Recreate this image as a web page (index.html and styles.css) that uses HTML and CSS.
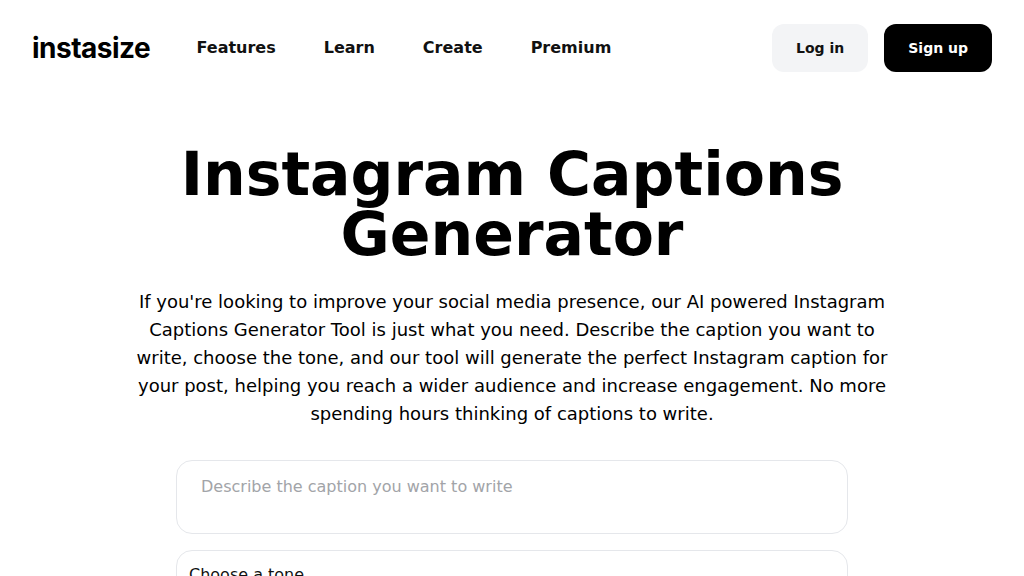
FILE: index.html
```html
<!DOCTYPE html>
<html lang="en">
<head>
<meta charset="utf-8">
<title>Instagram Captions Generator</title>
<link rel="stylesheet" href="styles.css">
</head>
<body>
<header class="header">
  <div class="header-left">
    <a class="logo" href="#">instasize</a>
    <nav class="nav">
      <a href="#">Features</a>
      <a href="#">Learn</a>
      <a href="#">Create</a>
      <a href="#">Premium</a>
    </nav>
  </div>
  <div class="actions">
    <a class="btn btn-light" href="#">Log in</a>
    <a class="btn btn-dark" href="#">Sign up</a>
  </div>
</header>
<main class="main">
  <h1 class="title">Instagram Captions Generator</h1>
  <p class="lead">If you're looking to improve your social media presence, our AI powered Instagram Captions Generator Tool is just what you need. Describe the caption you want to write, choose the tone, and our tool will generate the perfect Instagram caption for your post, helping you reach a wider audience and increase engagement. No more spending hours thinking of captions to write.</p>
  <form class="form">
    <textarea class="field-text" rows="2" placeholder="Describe the caption you want to write"></textarea>
    <div class="field-select">Choose a tone</div>
  </form>
</main>
</body>
</html>
```
FILE: styles.css
```css
* { box-sizing: border-box; }
html, body { margin: 0; height: 576px; overflow: hidden; background: #fff; }
body { font-family: "DejaVu Sans", sans-serif; color: #000; }
a { text-decoration: none; color: inherit; }
.header { display: flex; justify-content: space-between; align-items: center; height: 96px; padding: 0 32px; }
.header-left { display: flex; align-items: center; gap: 48px; }
.logo { font-family: Inter, sans-serif; font-weight: 700; font-size: 28px; line-height: 32px; letter-spacing: -0.5px; width: 116.5px; white-space: nowrap; }
.nav { display: flex; gap: 48px; font-size: 16px; font-weight: 700; color: #111; line-height: 24px; }
.actions { display: flex; gap: 16px; }
.btn { display: flex; align-items: center; justify-content: center; height: 48px; padding: 0 24px; border-radius: 12px; font-size: 14px; font-weight: 700; }
.btn-light { background: #f3f4f6; color: #111; }
.btn-dark { background: #000; color: #fff; }
.main { display: flex; flex-direction: column; align-items: center; padding-top: 48px; }
.title { margin: 0; width: 768px; text-align: center; font-size: 60px; line-height: 60px; font-weight: 700; }
.lead { margin: 24px 0 0; width: 768px; text-align: center; font-size: 18px; line-height: 28px; color: #000; }
.form { width: 672px; margin-top: 32px; display: flex; flex-direction: column; gap: 16px; }
.field-text { display: block; width: 100%; height: 74px; padding: 14px 24px; border: 1px solid #e5e7eb; border-radius: 16px; font: 16px/24px "DejaVu Sans", sans-serif; resize: none; outline: none; }
.field-text::placeholder { color: #a2a4a8; opacity: 1; }
.field-select { height: 56px; padding: 12px; border: 1px solid #e5e7eb; border-radius: 16px; font-size: 16px; line-height: 24px; color: #111; }
```
